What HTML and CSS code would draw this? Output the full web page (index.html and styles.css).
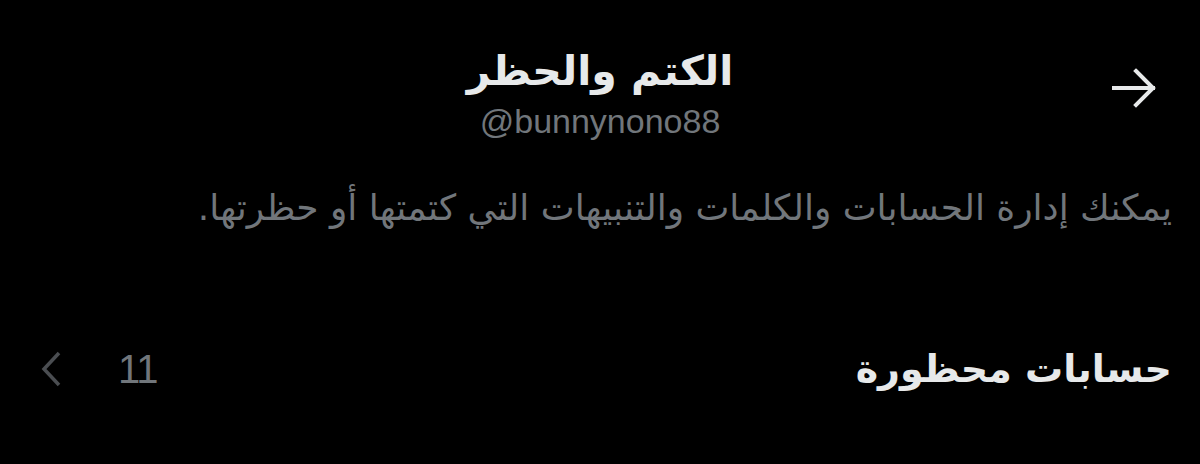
FILE: index.html
```html
<!DOCTYPE html>
<html lang="ar" dir="rtl">
<head>
<meta charset="utf-8">
<link rel="stylesheet" href="styles.css">
</head>
<body>
<div class="page">
  <header class="header">
    <div class="back">
      <svg width="46" height="42" viewBox="0 0 46 42" fill="none" stroke="#e7e9ea" stroke-width="4" stroke-linecap="square">
        <path d="M3 21 H42"/>
        <path d="M25 4 L42 21 L25 38"/>
      </svg>
    </div>
    <div class="titles">
      <h1 class="title">الكتم والحظر</h1>
      <div class="handle" dir="ltr">@bunnynono88</div>
    </div>
    <div class="spacer"></div>
  </header>
  <p class="desc">يمكنك إدارة الحسابات والكلمات والتنبيهات التي كتمتها أو حظرتها.</p>
  <div class="row">
    <div class="row-label">حسابات محظورة</div>
    <div class="row-end">
      <span class="count">11</span>
      <svg class="chev" width="22" height="36" viewBox="0 0 22 36" fill="none" stroke="#4a4d51" stroke-width="3.5">
        <path d="M19 2 L4 18 L19 34"/>
      </svg>
    </div>
  </div>
</div>
</body>
</html>
```

FILE: styles.css
```css
html, body {
  margin: 0;
  padding: 0;
  background: #000;
}
body {
  width: 1200px;
  height: 464px;
  overflow: hidden;
  font-family: "DejaVu Sans", "Liberation Sans", sans-serif;
}
.page {
  display: flex;
  flex-direction: column;
}
.header {
  display: flex;
  align-items: flex-start;
  padding: 40px 43px 0 43px;
  height: 108px;
}
.back {
  width: 46px;
  display: flex;
  padding-top: 27px;
}
.spacer {
  width: 46px;
}
.titles {
  flex: 1;
  display: flex;
  flex-direction: column;
  align-items: center;
}
.title {
  margin: 0;
  font-size: 41px;
  font-weight: bold;
  color: #e7e9ea;
  line-height: 62px;
}
.handle {
  font-family: "Liberation Sans", sans-serif;
  font-size: 34px;
  color: #71767b;
  line-height: 38px;
}
.desc {
  margin: 36px 28px 0 28px;
  font-size: 36px;
  line-height: 48px;
  color: #71767b;
}
.row {
  display: flex;
  align-items: center;
  justify-content: space-between;
  margin-top: 112px;
  padding: 0 28px 0 40px;
  height: 50px;
}
.row-label {
  font-size: 38px;
  font-weight: bold;
  color: #e7e9ea;
}
.row-end {
  display: flex;
  align-items: center;
  gap: 56px;
}
.count {
  font-family: "Liberation Sans", sans-serif;
  font-size: 40px;
  letter-spacing: -1px;
  color: #71767b;
}
.chev {
  display: block;
}
```
